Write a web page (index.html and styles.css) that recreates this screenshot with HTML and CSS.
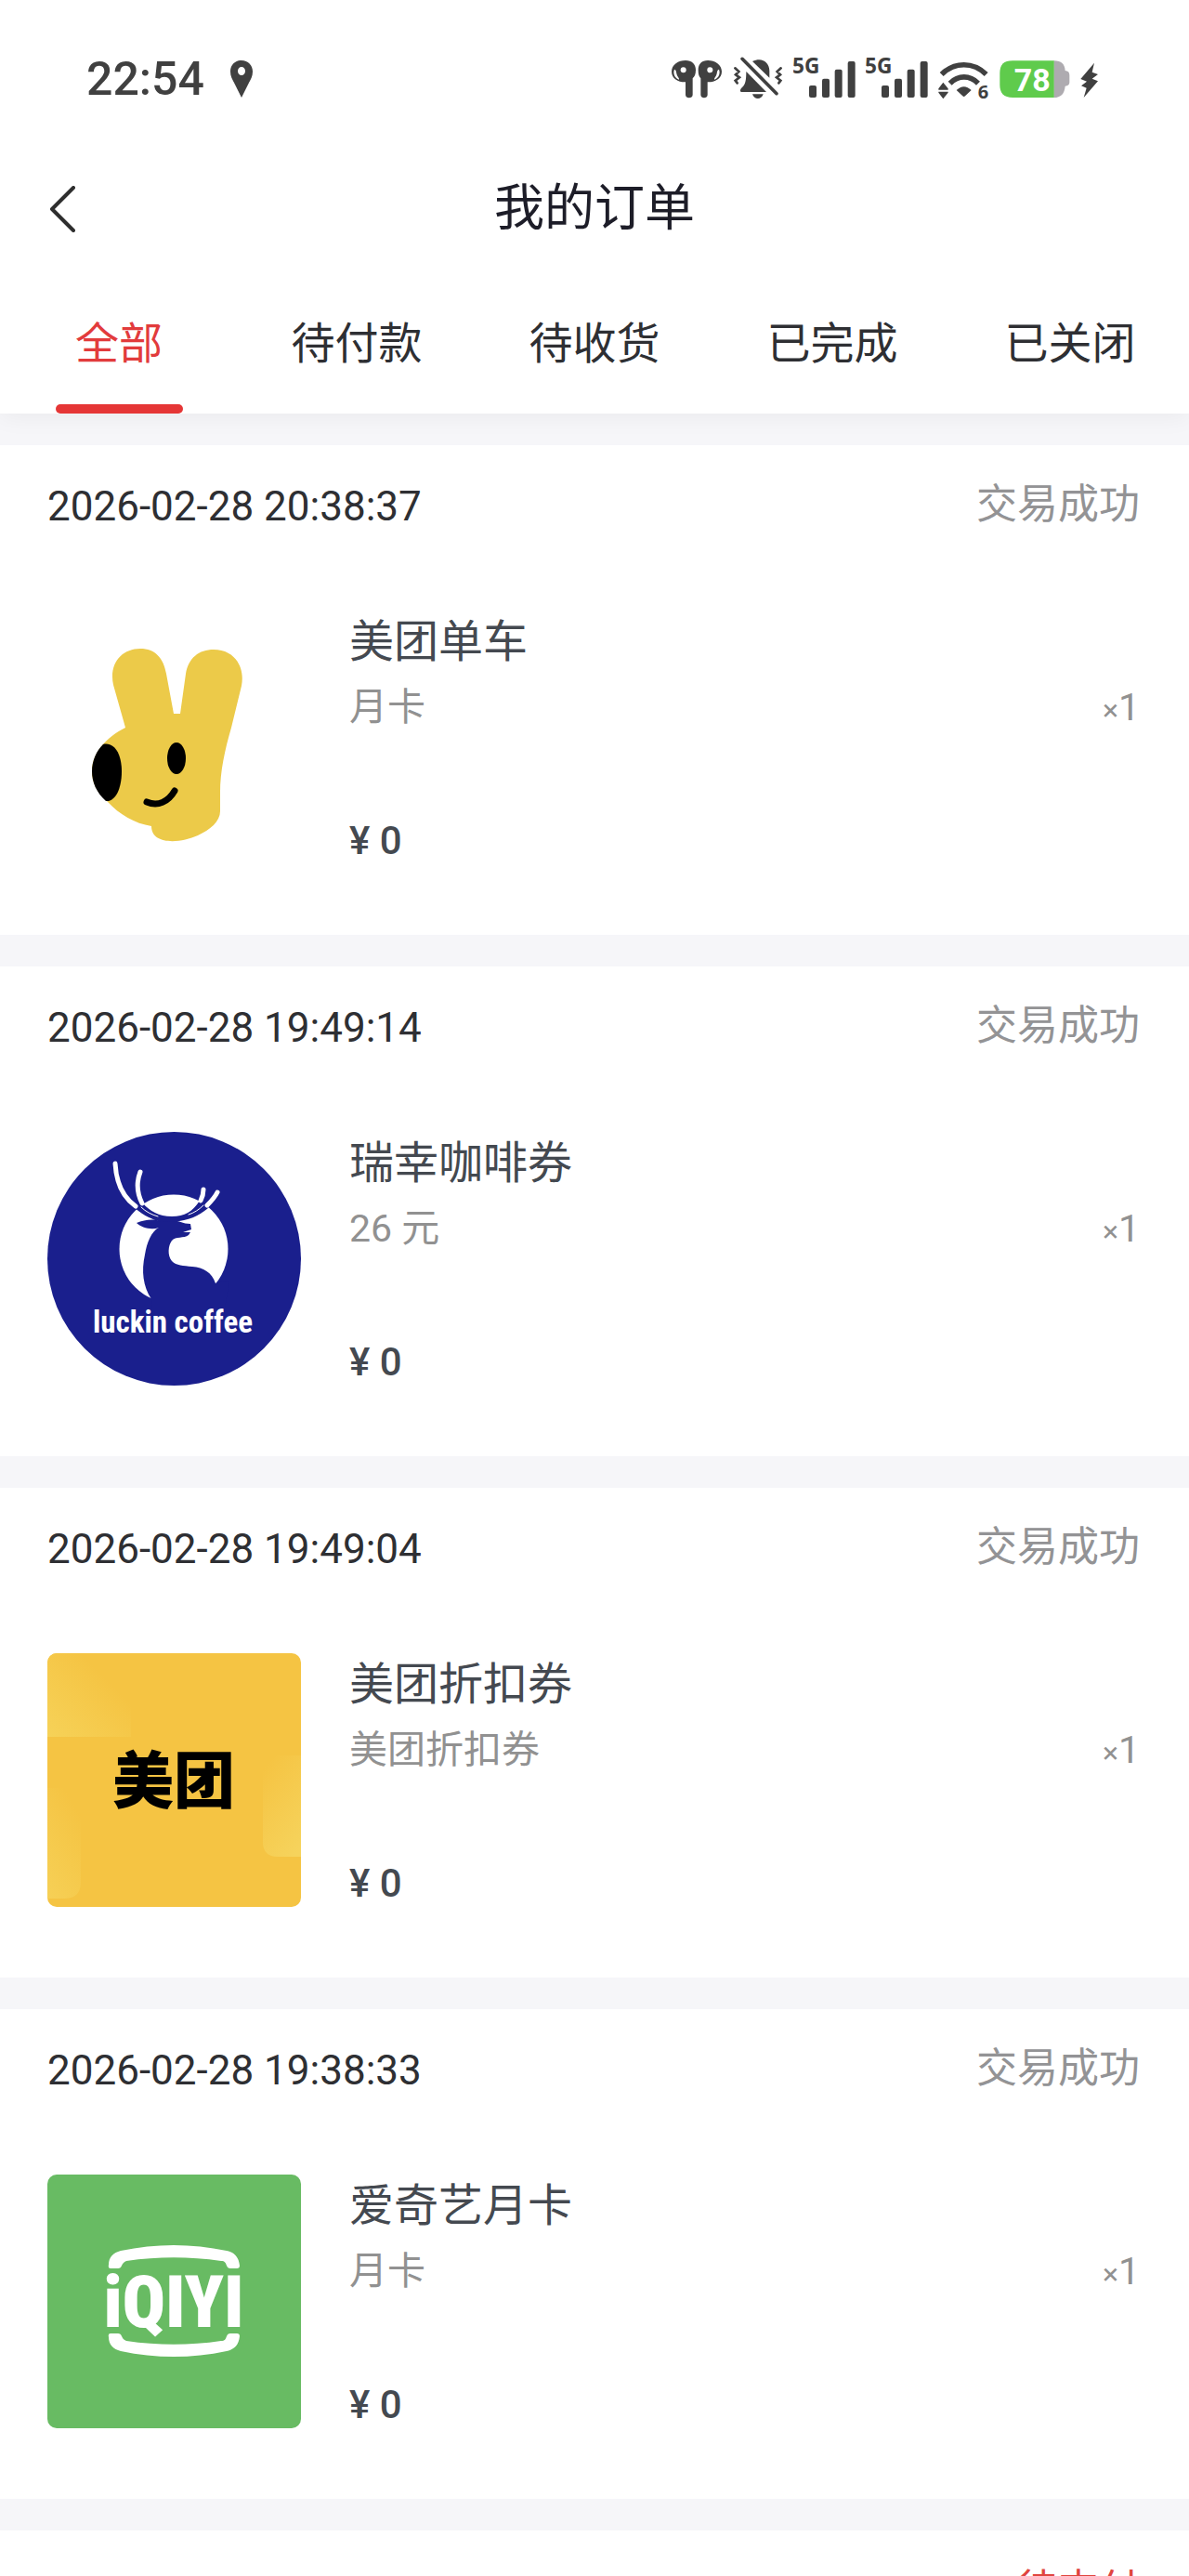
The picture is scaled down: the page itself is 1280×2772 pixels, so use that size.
FILE: index.html
```html
<!DOCTYPE html>
<html lang="zh-CN">
    <head>
        <meta charset="UTF-8">
        <meta name="viewport" content="width=device-width, initial-scale=1.0">
        <title>我的订单</title>
        <link rel="stylesheet" href="styles.css">
    </head>
    <body>
        <div class="status-bar">
            <div class="status-left">
                <span class="time">22:54</span>
                <svg class="pin" viewBox="0 0 24 40" width="24" height="40">
                    <path fill-rule="evenodd" d="M12 0C5 0 0 5 0 12c0 5 2 8 4 12l8 16 8-16c2-4 4-7 4-12C24 5 19 0 12 0zm0 7a4 4.500 0 1 1 0 9 4 4.500 0 0 1 0-9z"/>
                </svg>
            </div>
            <div class="status-icons">
                <!-- earbuds -->
                <svg viewBox="72 42 168 180" width="56" height="60">
                    <path d="M120 72c20 0 33 12 33 31 0 14-4 22-10 27v53c0 13-23 13-23 0v-41c-22 1-45-10-45-34 0-22 22-36 45-36z"/>
                    <path d="M192 72c-20 0-31 12-31 31 0 14 3 22 8 27v53c0 13 22 13 22 0v-41c22 1 46-10 46-34 0-22-22-36-45-36z"/>
                    <g fill="#fff">
                        <circle cx="113" cy="103" r="9"/>
                        <circle cx="199" cy="103" r="9"/>
                        <path d="M84 101c-5 14 0 27 14 33 4-3-5-9-7-19-1-7-2-14-7-14zM228 101c5 14 0 27-14 33-4-3 5-9 7-19 1-7 2-14 7-14z"/>
                    </g>
                </svg>
                <!-- muted bell -->
                <svg viewBox="279 42 162 180" width="54" height="60">
                    <path d="M322 108l65 66h-80c-8 0-4-10 4-17 8-8 11-20 11-49zM342 75c30-15 55 2 55 31v22zM342 181h35c-5 19-30 19-35 0z"/>
                    <path class="line" stroke-width="11" d="M309 67l111 112"/>
                    <path class="line thin" d="M286 97l12 11-10 10 12 9-13 10 6 8M434 97l-12 11 10 10-12 9 13 10-6 8"/>
                </svg>
                <svg viewBox="465 42 201 180" width="67" height="60">
                    <text class="net" x="462" y="113">5G</text>
                    <rect x="516" y="153" width="24" height="39" rx="6"/>
                    <rect x="558" y="131" width="24" height="61" rx="6"/>
                    <rect x="599" y="101" width="24" height="91" rx="6"/>
                    <rect x="641" y="75" width="24" height="117" rx="6"/>
                </svg>
                <svg viewBox="465 42 201 180" width="67" height="60">
                    <text class="net" x="462" y="113">5G</text>
                    <rect x="516" y="153" width="24" height="39" rx="6"/>
                    <rect x="558" y="131" width="24" height="61" rx="6"/>
                    <rect x="599" y="101" width="24" height="91" rx="6"/>
                    <rect x="641" y="75" width="24" height="117" rx="6"/>
                </svg>
                <!-- wifi -->
                <svg viewBox="932 42 165 180" width="55" height="60">
                    <path fill="none" stroke="#404040" stroke-width="17" d="M943 117c42-41 102-41 144 0M970 146c27-27 64-27 91 0"/>
                    <path d="M991 168q24-23 48 0l-20 19q-4 4-8 0zM948 143l16 20v4h-31v-4zM948 196l-15-20v-3h31v3z"/>
                    <text class="wifi-gen" x="1060" y="195">6</text>
                </svg>
                <!-- battery -->
                <svg viewBox="1137 42 228 180" width="76" height="60">
                    <path fill="#aeabb0" d="M1312 73c25 0 36 12 37 32 9 1 14 5 14 14v24c0 7-5 11-14 12-2 24-13 37-37 37z"/>
                    <path fill="#5fcb4c" d="M1180 73h133v119h-133c-30 0-42-14-42-42v-36c0-28 12-41 42-41z"/>
                    <text class="battery-level" x="1184" y="170">78</text>
                </svg>
                <!-- charging -->
                <svg viewBox="1388 42 60 180" width="20" height="60">
                    <path d="M1433 80l-44 52 20 8-18 14 17 7-9 31 46-53-19-8 19-14-19-7z"/>
                </svg>
            </div>
        </div>

        <header class="nav">
            <button class="back" type="button" aria-label="返回">
                <svg viewBox="0 0 28 50" width="28" height="50"><path d="M26 2L3 25l23 23"/></svg>
            </button>
            <h1>我的订单</h1>
        </header>

        <nav class="tabs">
            <button class="tab active" type="button">全部</button>
            <button class="tab" type="button">待付款</button>
            <button class="tab" type="button">待收货</button>
            <button class="tab" type="button">已完成</button>
            <button class="tab" type="button">已关闭</button>
        </nav>

        <main class="orders">
            <article class="order">
                <div class="order-head">
                    <time>2026-02-28 20:38:37</time>
                    <span class="state">交易成功</span>
                </div>
                <div class="order-body">
                    <svg class="thumb" viewBox="0 0 273 273">
                        <path fill="#ecca49" d="M84 126L71 80C66 57 80 41 100 41c16 0 25 10 28 27l8 43h7l6-43c3-17 14-26 30-26 22 0 34 18 30 39l-11 45c-7 24-12 47-12 70v20c0 11-11 20-24 26-20 9-50 10-50-10-18-3-34-12-48-27-11-10-16-20-16-32 0-20 16-37 36-47z"/>
                        <path d="M60 144c13-3 20 12 20 29 0 19-7 33-17 32-10-9-15-20-15-32 0-12 5-22 12-29z"/>
                        <ellipse cx="139" cy="159" rx="10" ry="17"/>
                        <path fill="none" stroke="#000" stroke-width="7" stroke-linecap="round" d="M107 206c12 5 23 0 30-12"/>
                    </svg>
                    <div class="info">
                        <h2>美团单车</h2>
                        <div class="spec"><span>月卡</span><span class="count"><small>×</small>1</span></div>
                        <div class="price">¥ 0</div>
                    </div>
                </div>
            </article>

            <article class="order">
                <div class="order-head">
                    <time>2026-02-28 19:49:14</time>
                    <span class="state">交易成功</span>
                </div>
                <div class="order-body">
                    <svg class="thumb round" viewBox="0 0 273 273">
                        <rect width="273" height="273" fill="#1a1f8d"/>
                        <circle cx="136" cy="126" r="58.500" fill="#fff"/>
                        <!-- deer -->
                        <g fill="#1a1f8d">
                            <path d="M120 103C112 107 107 119 105 132C101 150 103 166 112 180L113 196H190L196 160L181 163C177 151 168 146 156 145C146 144 139 144 134 139C129 133 130 122 134 117C138 112 147 115 152 111L154 108L146 108L155 105L154 99C146 99 141 95 133 95L121 96C113 93 104 95 96 98C101 103 112 106 120 103Z"/>
                            <path d="M94 82C105 91 113 94 122 97L142 96C156 94 167 88 175 80L164 74C156 86 148 91 134 91C120 91 110 85 103 77Z"/>
                        </g>
                        <path class="antlers" d="M73 34c1 20 8 36 22 46M100 43c-5 13-3 24 2 34M168 62c0 5-1 8-3 12M183 65c-3 6-7 10-11 14"/>
                        <path class="antlers fine" d="M101 81c5 5 11 8 18 10M168 79c-5 5-10 8-16 10"/>
                        <text class="luckin" x="135" y="216">luckin coffee</text>
                    </svg>
                    <div class="info">
                        <h2>瑞幸咖啡券</h2>
                        <div class="spec"><span>26 元</span><span class="count"><small>×</small>1</span></div>
                        <div class="price">¥ 0</div>
                    </div>
                </div>
            </article>

            <article class="order">
                <div class="order-head">
                    <time>2026-02-28 19:49:04</time>
                    <span class="state">交易成功</span>
                </div>
                <div class="order-body">
                    <svg class="thumb" viewBox="0 0 273 273">
                        <defs>
                            <linearGradient id="glow-a" x1="0" y1="1" x2="0.700" y2="0.300">
                                <stop offset="0" stop-color="#f6d258"/>
                                <stop offset="1" stop-color="#f5c443"/>
                            </linearGradient>
                            <linearGradient id="glow-b" x1="0.800" y1="1" x2="0.300" y2="0">
                                <stop offset="0" stop-color="#f6d35c"/>
                                <stop offset="1" stop-color="#f5c443"/>
                            </linearGradient>
                            <linearGradient id="glow-c" x1="0" y1="1" x2="0.500" y2="0">
                                <stop offset="0" stop-color="#f6d056"/>
                                <stop offset="1" stop-color="#f5c443"/>
                            </linearGradient>
                        </defs>
                        <rect width="273" height="273" fill="#f5c443"/>
                        <rect width="90" height="90" fill="url(#glow-a)"/>
                        <path fill="url(#glow-c)" d="M0 145h18q18 0 18 18v83q0 18-18 18H0z"/>
                        <path fill="url(#glow-b)" d="M232 110h41v109h-25q-16 0-16-16z"/>
                        <text class="meituan" x="136" y="161">美团</text>
                    </svg>
                    <div class="info">
                        <h2>美团折扣券</h2>
                        <div class="spec"><span>美团折扣券</span><span class="count"><small>×</small>1</span></div>
                        <div class="price">¥ 0</div>
                    </div>
                </div>
            </article>

            <article class="order">
                <div class="order-head">
                    <time>2026-02-28 19:38:33</time>
                    <span class="state">交易成功</span>
                </div>
                <div class="order-body">
                    <svg class="thumb" viewBox="0 0 273 273">
                        <rect width="273" height="273" fill="#68bb63"/>
                        <g fill="#fff">
                            <path d="M68 101q-3 0-2-4c0-8 5-13 13-15 38-8 76-8 114 0 9 2 13 7 14 16q0 3-3 3h-7q-3 0-4-3c-1-3-2-5-6-5-34-5-68-5-102 0-3 1-4 3-5 5q-1 3-4 3z"/>
                            <path d="M68 171q-3 0-2 4c0 8 5 13 13 15 38 8 76 8 114 0 9-2 13-7 14-16q0-3-3-3h-7q-3 0-4 3c-1 3-2 5-6 5-34 5-68 5-102 0-3-1-4-3-5-5q-1-3-4-3z"/>
                        </g>
                        <text class="iqiyi" x="136" y="164">iQIYI</text>
                    </svg>
                    <div class="info">
                        <h2>爱奇艺月卡</h2>
                        <div class="spec"><span>月卡</span><span class="count"><small>×</small>1</span></div>
                        <div class="price">¥ 0</div>
                    </div>
                </div>
            </article>

            <article class="order">
                <div class="order-head">
                    <span class="state unpaid">待支付</span>
                </div>
            </article>
        </main>
    </body>
</html>
```

FILE: styles.css
```css
* {
    box-sizing: border-box;
}
body {
    margin: 0;
    height: 100vh;
    display: flex;
    flex-direction: column;
    overflow: hidden;
    background-color: #fff;
    color: #2e2f33;
    font-family: Roboto, "Noto Sans CJK SC", sans-serif;
}
button {
    border: 0;
    padding: 0;
    background: none;
    color: inherit;
    font: inherit;
    cursor: pointer;
}
h1, h2 {
    margin: 0;
    font-weight: 400;
}
svg {
    display: block;
    flex: none;
}

/* phone status bar */
.status-bar {
    flex: none;
    display: flex;
    align-items: center;
    justify-content: space-between;
    height: 170px;
    padding: 0 97px 0 93px;
}
.status-left {
    display: flex;
    align-items: center;
    gap: 28px;
}
.time {
    font-size: 50px;
    line-height: 56px;
    font-weight: 500;
    color: #404040;
}
.status-icons {
    display: flex;
    gap: 11px;
}
.status-bar svg {
    fill: #404040;
}
.status-bar .line {
    fill: none;
    stroke: #404040;
    stroke-linecap: round;
}
.status-bar .thin {
    stroke-width: 8px;
}
.net {
    font: 700 68px "Noto Sans", sans-serif;
}
.wifi-gen {
    font: 700 60px "Noto Sans", sans-serif;
}
.battery-level {
    font: 700 102px Roboto, sans-serif;
    fill: #fff;
}

/* title bar */
.nav {
    position: relative;
    z-index: 1;
    flex: none;
    display: grid;
    grid-template-columns: 1fr auto 1fr;
    align-items: center;
    height: 110px;
    padding: 0 53px;
    background-color: #fff;
}
.back {
    justify-self: start;
}
.back path {
    fill: none;
    stroke: #2e2e2e;
    stroke-width: 4px;
    stroke-linecap: round;
    stroke-linejoin: round;
}
.nav h1 {
    font-size: 54px;
    line-height: 64px;
    color: #1d1d28;
}

.tabs {
    flex: none;
    display: flex;
    position: relative;
    background-color: #fff;
    box-shadow: 0 4px 24px rgba(0, 0, 0, 0.05);
}
.tab {
    flex: 1;
    display: flex;
    flex-direction: column;
    align-items: center;
    padding-top: 62px;
    font-size: 47px;
    line-height: 56px;
}
.tab::after {
    content: "";
    width: 137px;
    height: 10px;
    margin-top: 37px;
    border-radius: 5px;
}
.tab.active {
    color: #e23b3c;
}
.tab.active::after {
    background-color: #e53636;
}

/* order list */
.orders {
    flex: 1;
    min-height: 0;
    display: flex;
    flex-direction: column;
    gap: 34px;
    padding-top: 34px;
    overflow: hidden;
    background-color: #f6f6f9;
}
.order {
    flex: none;
    padding: 0 53px 76px 51px;
    background-color: #fff;
}
.order-head {
    display: flex;
    align-items: center;
    justify-content: space-between;
    height: 126px;
    font-size: 44px;
    line-height: 52px;
}
.order-head time {
    padding-top: 6px;
}
.state {
    margin-left: auto;
    padding-top: 2px;
    color: #939395;
}
.unpaid {
    color: #e0453f;
}
.order-body {
    display: flex;
    gap: 52px;
    margin-top: 52px;
}
.thumb {
    width: 273px;
    height: 273px;
    border-radius: 10px;
}
.thumb.round {
    border-radius: 50%;
}
.info {
    flex: 1;
    display: flex;
    flex-direction: column;
    padding-top: 6px;
    color: #444950;
}
.info h2 {
    font-size: 48px;
    line-height: 56px;
}
.spec {
    display: flex;
    justify-content: space-between;
    margin-top: 16px;
    font-size: 41px;
    line-height: 52px;
    color: #919191;
}
.count small {
    font-size: 32px;
}
.price {
    margin-top: auto;
    font-size: 42px;
    line-height: 50px;
    font-weight: 500;
}

/* logo lettering */
.antlers {
    fill: none;
    stroke: #fff;
    stroke-width: 5px;
    stroke-linecap: round;
}
.antlers.fine {
    stroke-width: 1px;
}
.luckin, .meituan, .iqiyi {
    text-anchor: middle;
}
.luckin {
    font: 700 33px "Roboto Condensed", "Liberation Sans Narrow", Roboto, sans-serif;
    fill: #fff;
}
.meituan {
    font: 900 66px "Noto Sans CJK SC", sans-serif;
}
.iqiyi {
    font: 900 77px "Roboto Condensed", "Liberation Sans Narrow", Roboto, sans-serif;
    fill: #fff;
}
```
